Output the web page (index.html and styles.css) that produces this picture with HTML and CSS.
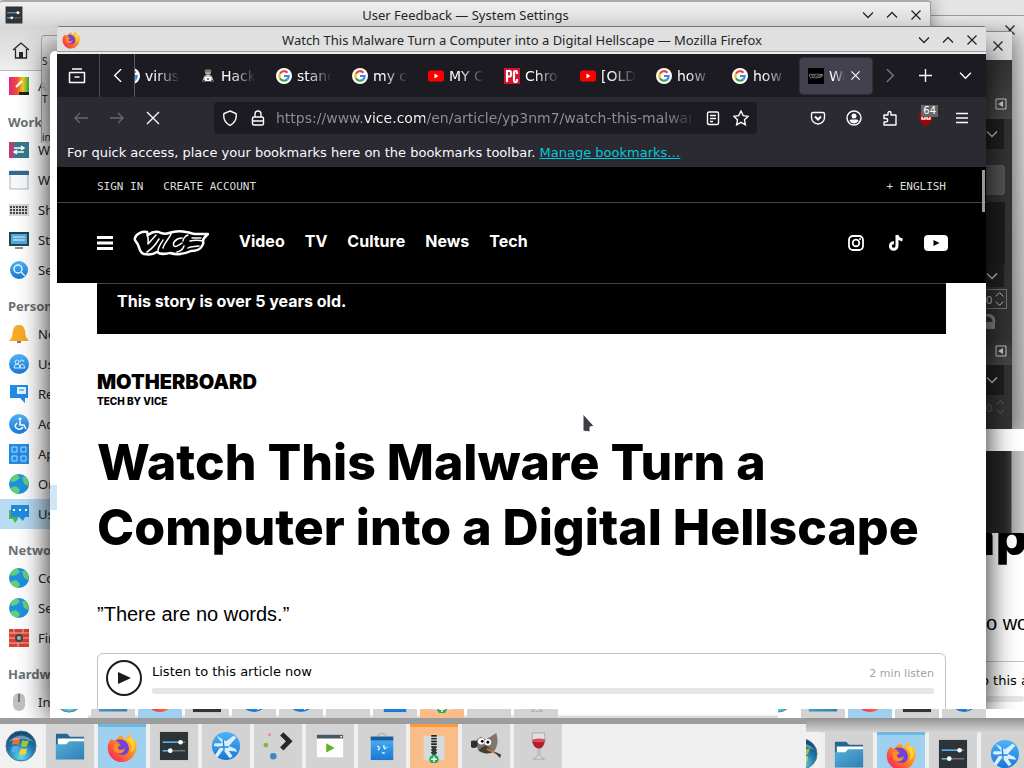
FILE: index.html
```html
<!DOCTYPE html>
<html lang="en">

<head>
    <meta charset="UTF-8">
    <title>Desktop</title>
    <link rel="stylesheet" href="styles.css">
</head>

<body>

    <!-- shared icons -->
    <svg class="defs" aria-hidden="true">
        <defs>
            <linearGradient id="gBlue" x1="0" y1="0" x2="0" y2="1">
                <stop offset="0" stop-color="#4fb4f5" />
                <stop offset="1" stop-color="#1a76d6" />
            </linearGradient>
            <linearGradient id="gFolder" x1="0" y1="0" x2="1" y2="1">
                <stop offset="0" stop-color="#55b0dc" />
                <stop offset="1" stop-color="#2f80b4" />
            </linearGradient>
            <linearGradient id="gFox" x1="1" y1="0" x2="0" y2="1">
                <stop offset="0" stop-color="#ffe03a" />
                <stop offset=".45" stop-color="#ff8a1e" />
                <stop offset=".8" stop-color="#ff3b4e" />
                <stop offset="1" stop-color="#e0158a" />
            </linearGradient>
            <radialGradient id="gOrb" cx=".5" cy=".85" r=".9">
                <stop offset="0" stop-color="#5fe0f0" />
                <stop offset=".5" stop-color="#1f79ae" />
                <stop offset="1" stop-color="#123a5c" />
            </radialGradient>
            <linearGradient id="gRainbow" x1="0" y1="0" x2="1" y2="0">
                <stop offset="0" stop-color="#e0208c" />
                <stop offset=".4" stop-color="#f0502c" />
                <stop offset=".7" stop-color="#f0d020" />
                <stop offset="1" stop-color="#30b040" />
            </linearGradient>
        </defs>
        <symbol id="down" viewBox="0 0 12 12"><path d="M1 3.5l5 5 5-5" fill="none" stroke="currentColor" stroke-width="1.3" /></symbol>
        <symbol id="up" viewBox="0 0 12 12"><path d="M1 8.5l5-5 5 5" fill="none" stroke="currentColor" stroke-width="1.3" /></symbol>
        <symbol id="right" viewBox="0 0 12 12"><path d="M3.5 0l6 6-6 6" fill="none" stroke="currentColor" stroke-width="1.3" /></symbol>
        <symbol id="left" viewBox="0 0 12 12"><path d="M8.5 0l-6 6 6 6" fill="none" stroke="currentColor" stroke-width="1.3" /></symbol>
        <symbol id="cross" viewBox="0 0 12 12"><path d="M1.5 1.5l9 9M10.5 1.5l-9 9" fill="none" stroke="currentColor" stroke-width="1.3" /></symbol>
        <symbol id="plus" viewBox="0 0 12 12"><path d="M6 0v12M0 6h12" fill="none" stroke="currentColor" stroke-width="1.3" /></symbol>
        <symbol id="dock" viewBox="0 0 12 12"><path d="M1 1h10v10H1z" fill="none" stroke="currentColor" /><path d="M8 3v6L3 6z" fill="currentColor" /></symbol>
        <symbol id="google" viewBox="0 0 16 16">
            <circle cx="8" cy="8" r="8" fill="#fff" />
            <g fill="none" stroke-width="2.2">
                <path d="M11.5 4.7A4.7 4.7 0 0 0 3.900 5.700" stroke="#ea4335" />
                <path d="M3.900 5.700a4.700 4.700 0 0 0 0 4.600" stroke="#fbbc05" />
                <path d="M3.900 10.300a4.700 4.700 0 0 0 7.400 1.100" stroke="#34a853" />
                <path d="M11.300 11.400A4.700 4.700 0 0 0 12.700 8H8" stroke="#4285f4" />
            </g>
        </symbol>
        <symbol id="youtube" viewBox="0 0 16 16"><rect y="2.500" width="16" height="11" rx="2.500" fill="#f00" /><path d="M6.500 5.500v5l4-2.500z" fill="#fff" /></symbol>
        <symbol id="hacker" viewBox="0 0 16 16">
            <circle cx="8" cy="4" r="3" fill="#aaa89c" /><path d="M4 3h8M5 1.500h6" stroke="#55554e" />
            <path d="M3 13c0-5 2-6 5-6s5 1 5 6z" fill="#c9c8be" /><path d="M2 12h12v2H2z" fill="#555" /><path d="M5 9h6v4H5z" fill="#fff" /><path d="M7 10h2v2H7z" fill="#777" />
        </symbol>
        <symbol id="pcmag" viewBox="0 0 16 16"><rect width="16" height="16" fill="#d8122f" /><path d="M3 14V3h2.500q1.500 0 1.500 2v1.500q0 2-1.500 2H3M13 6V5q0-2-1.500-2T10 5v7q0 2 1.500 2t1.500-2v-1" fill="none" stroke="#fff" stroke-width="2.200" /></symbol>
        <symbol id="vice" viewBox="0 0 76 26">
            <g fill="none" stroke="currentColor" stroke-linejoin="round" stroke-linecap="round">
                <path d="M2 8C3 4 9 1 14 2l1 3c4-3 9-4 13-2 3 1 5 1 8 0 6-2 12-2 17-1 3 0 6 2 9 2l13 0c-3 3-5 4-5 7 1 2 0 3-1 5-2 4-6 5-11 5-6 3-14 4-21 2-5 1-9 2-13-1-3 2-8 3-13 2C6 23 7 17 4 13 2 11 1 10 2 8z" stroke-width="2.500" />
                <path d="M14 5c2 3 1 6 1 9l8-9M14 22c5-3 9-8 12-13M30 10c-2 4-6 8-5 12M38 4c-2 5-7 9-8 14M49 8c-6 0-10 5-8 8 2 2 5-1 8-3M44 22c4-1 6-3 7-6M55 5c-3 1-5 4-5 6M70 11c-4-1-9-1-13 0M68 8h-9M66 16c-4 1-8 0-11 2" stroke-width="1.500" />
            </g>
        </symbol>
        <symbol id="folder" viewBox="0 0 32 32"><path d="M1 3h12l3 3h15v24H1z" fill="#23698f" /><path d="M3 8h28v8H3z" fill="#fff" /><path d="M1 14h11l3-3h16v19H1z" fill="url(#gFolder)" /></symbol>
        <symbol id="firefox" viewBox="0 0 32 32">
            <path d="M5 6c1 2 2 2 4 2 2-3 5-5 8-6 0 3 1 4 3 5 2-3 3-5 3-7 3 4 3 6 3 8 2 0 3-1 4-2 2 5 2 9 1 13-2 7-8 12-15 12C8 31 2 25 1 18 0 13 2 9 5 6z" fill="url(#gFox)" />
            <path d="M9 8c5-3 13 0 14 6 2 7-4 11-9 9-4-1-6-5-4-8 0-3 2-4 4-4z" fill="#7142d6" />
            <path d="M7 12c3-1 5-1 8 1-3 1-4 2-3 4 2 2 5 1 7-1 0 6-8 8-12 2z" fill="#ff8c24" />
            <path d="M20 7c6 2 8 8 5 14 5-3 6-9 1-16z" fill="#ffd43a" />
        </symbol>
        <symbol id="settings" viewBox="0 0 32 32"><path d="M1 1h30v30H1z" fill="#2e3338" /><path d="M4 12h24M4 21h24" stroke="#70777c" stroke-width="1.500" /><path d="M4 12h18M4 21h7" stroke="#4db5ed" stroke-width="1.500" /><circle cx="23" cy="12" r="2.500" fill="#fff" /><circle cx="12" cy="21" r="2.500" fill="#fff" /></symbol>
        <symbol id="kde" viewBox="0 0 32 32"><circle cx="16" cy="16" r="15" fill="url(#gBlue)" /><path d="M6 5l10 6 8-6 3 2-8 9 7 3 2 3-9-1 4 6-3 2-7-9-6 8-3-2 6-9-7-1 1-3 8 0z" fill="#d9f0ff" /><path d="M13 9l1 12M9 17h10" stroke="#2384e2" stroke-width="1.500" /></symbol>
        <symbol id="plasma" viewBox="0 0 32 32"><path d="M20 3l8 8-8 8" fill="none" stroke="#25282b" stroke-width="5" /><circle cx="7" cy="4" r="1.500" fill="#f08b78" /><circle cx="3" cy="15" r="2.500" fill="#85b73b" /><circle cx="11" cy="27" r="3.500" fill="#4187c6" /></symbol>
        <symbol id="player" viewBox="0 0 32 32"><path d="M2 4h28v24H2z" fill="#fdfdfd" /><path d="M2 4h28v4H2z" fill="#46576a" /><circle cx="28" cy="6" r="1" fill="#fff" /><path d="M12 13v10l9-5z" fill="#5cb51c" /></symbol>
        <symbol id="bag" viewBox="0 0 32 32"><path d="M11 6q5-7 10 0" fill="none" stroke="#a9bcc6" stroke-width="2" /><path d="M4 6h24v25H4z" fill="url(#gBlue)" /><path d="M4 6h24v4H4z" fill="#1d5c99" /><path d="M11 16l3 2-3 3M18 15v4l4-2M16 23l4 1" stroke="#e5f7ff" stroke-width="1.500" fill="none" stroke-dasharray="3 1" /></symbol>
        <symbol id="ark" viewBox="0 0 32 32"><path d="M5 3h22v26H5z" fill="#d5dadc" /><path d="M16 2v29" stroke="#fff" stroke-width="6" /><path d="M16 2v20" stroke="#222" stroke-width="6" stroke-dasharray="2 1" /><path d="M14 14h4v16h-4z" fill="#34383a" /><circle cx="16" cy="28" r="5" fill="#27a85a" /><path d="M16 25v6M13 28h6" stroke="#fff" stroke-width="1.500" /></symbol>
        <symbol id="gimp" viewBox="0 0 32 32"><path d="M4 11l6-5 6 3 11-7c2 7 2 13-2 19-5 4-14 3-17 0z" fill="#81766a" /><path d="M8 20l8-5 8 7q-9 5-16-2z" fill="#42403b" /><circle cx="11" cy="11" r="3.500" fill="#fff" /><circle cx="18" cy="12" r="3.500" fill="#fff" /><circle cx="12" cy="11" r="1.500" /><circle cx="18" cy="12" r="1.500" /><circle cx="3" cy="14" r="4" fill="#2b2f31" /><path d="M17 19l12 6" stroke="#c4793f" stroke-width="2" /><path d="M25 22l7 3-1 4z" fill="#34393f" /></symbol>
        <symbol id="wine" viewBox="0 0 32 32"><path d="M10 2h13q2 14-5 17v8l5 3H11l5-3v-8q-8-4-6-17z" fill="#e3dfe0" stroke="#aaa3a4" /><path d="M10 10h13q0 7-6 9-7-2-7-9z" fill="#b41d30" /><ellipse cx="17" cy="10" rx="7" ry="2" fill="#dc4e5c" /></symbol>
        <symbol id="orb" viewBox="0 0 32 32"><circle cx="16" cy="16" r="15" fill="url(#gOrb)" stroke="#4d748c" /><path d="M8 9q4-2 7 0l-1 6q-4-2-7 0z" fill="#ef6a37" /><path d="M17 10q4 2 7 0l-2 6q-3 2-6 0z" fill="#9ac93c" /><path d="M7 17q4-2 7 0l-2 6q-3-2-6 0z" fill="#5ba9e8" /><path d="M16 18q3 2 6 0l-1 6q-4 2-7 0z" fill="#f9cf3c" /><path d="M3 12q13-13 26 0Q16 6 3 12z" fill="#fff" opacity=".35" /></symbol>
        <symbol id="globe" viewBox="0 0 20 20"><circle cx="10" cy="10" r="10" fill="#1d91e0" /><path d="M1 6q4-6 8-5l2 3-4 3-4 1zM1 14l6-2 4 4-2 4Q3 19 1 14zM13 3l4 0q4 5 2 9l-4-2z" fill="#63cf79" /></symbol>
    </svg>

    <div class="desktop">

        <!-- windows at the back, right side -->
        <section class="window back-window">
            <button class="icon-btn" aria-label="Close"><svg><use href="#cross" /></svg></button>
        </section>
        <section class="window gimp-window">
            <header><button class="icon-btn" aria-label="Close"><svg><use href="#cross" /></svg></button></header>
            <div class="gimp-head"><svg><use href="#dock" /></svg></div>
            <div class="gimp-pick"><svg><use href="#down" /></svg></div>
            <div class="gimp-tile"></div>
            <div class="gimp-list"></div>
            <div class="gimp-pick small"><svg><use href="#down" /></svg></div>
            <div class="gimp-spin"><span>0</span><span><svg><use href="#up" /></svg><svg><use href="#down" /></svg></span></div>
            <svg class="gimp-lock" viewBox="0 0 10 16"><path d="M0 1q8 0 8 7" fill="none" stroke="#888" stroke-width="3" /><path d="M0 8h9v7H0z" fill="#888" /></svg>
            <div class="gimp-head low"><svg><use href="#dock" /></svg></div>
            <div class="gimp-pick"><svg><use href="#down" /></svg></div>
            <div class="gimp-spin off"><span>0</span><span><svg><use href="#up" /></svg><svg><use href="#down" /></svg></span></div>
        </section>
        <section class="side-article">
            <div class="side-panel"></div>
            <p class="side-title">ap</p>
            <p class="side-lead">o wo</p>
            <div class="side-listen"><p>o this a</p><div class="track"></div></div>
        </section>

        <!-- System Settings -->
        <section class="window settings-window">
            <header class="titlebar">
                <svg class="app-icon"><use href="#settings" /></svg>
                <h2>User Feedback — System Settings</h2>
                <button class="icon-btn" aria-label="Minimize"><svg><use href="#down" /></svg></button>
                <button class="icon-btn" aria-label="Maximize"><svg><use href="#up" /></svg></button>
                <button class="icon-btn" aria-label="Close"><svg><use href="#cross" /></svg></button>
            </header>
            <div class="settings-tools">
                <button class="home" aria-label="Home"><svg viewBox="0 0 18 18"><path d="M1 9l8-7 8 7M3.500 8v9h11V8" fill="none" stroke="#232629" stroke-width="1.300" /><path d="M7 11h4v6H7z" fill="#232629" /></svg></button>
            </div>
            <nav class="sidebar">
                <a href="#"><svg viewBox="0 0 20 20"><path d="M0 1h20v18H0z" fill="url(#gRainbow)" /><path d="M7 11l6-6" stroke="#fff" stroke-width="2" /><path d="M10 16h10v3H10z" fill="#222" /></svg>A</a>
                <h3>Work</h3>
                <a href="#"><svg viewBox="0 0 20 20"><path d="M0 2h20v16H0z" fill="#367a8e" /><path d="M0 2h5v16H0z" fill="#b83d72" /><path d="M5 8h9M6 12h9M12 6l3 2-3 2M8 10l-3 2 3 2" stroke="#fff" fill="none" stroke-width="1.500" /></svg>W</a>
                <a href="#"><svg viewBox="0 0 20 20"><path d="M1 1h18v18H1z" fill="#f6f8fa" stroke="#a9b5bd" /><path d="M0 1h20v4H0z" fill="#36688f" /></svg>W</a>
                <a href="#"><svg viewBox="0 0 20 20"><path d="M0 4h20v12H0z" fill="#d6d9da" /><path d="M1 7h18M1 10h18M1 13h18" stroke="#444" stroke-width="2" stroke-dasharray="2 1" /></svg>Sh</a>
                <a href="#"><svg viewBox="0 0 20 20"><path d="M0 2h20v14H0z" fill="#1e4759" /><path d="M2 4h16v10H2z" fill="#54a8d6" /><path d="M4 7h12M4 10h12" stroke="#e4f5fc" /><path d="M6 18h8" stroke="#889196" stroke-width="2" /></svg>St</a>
                <a href="#"><svg viewBox="0 0 20 20"><circle cx="10" cy="10" r="9" fill="url(#gBlue)" /><circle cx="9" cy="9" r="4" fill="none" stroke="#e3f5ff" stroke-width="1.500" /><path d="M12 12l4 4" stroke="#e3f5ff" stroke-width="1.500" /></svg>Se</a>
                <h3>Person</h3>
                <a href="#"><svg viewBox="0 0 20 20"><path d="M10 1c7 0 6 8 7 12l3 4H0l3-4c1-4 0-12 7-12z" fill="#f7a928" /><path d="M8 17h4v2H8z" fill="#7a7e80" /></svg>No</a>
                <a href="#"><svg viewBox="0 0 20 20"><circle cx="10" cy="10" r="10" fill="url(#gBlue)" /><path d="M5 14q0-4 3-4t3 4zM11 14q0-4 2-4t3 4zM6 8a2 2 0 1 1 4 0 2 2 0 1 1-4 0M11 8a2 2 0 1 1 4 0" fill="none" stroke="#d8f0ff" /></svg>Us</a>
                <a href="#"><svg viewBox="0 0 20 20"><path d="M1 1h18v13h-3v5l-5-5H1z" fill="#228be6" /><path d="M8 3h9v7H8z" fill="#e2f5ff" /><path d="M10 6h5" stroke="#228be6" /></svg>Re</a>
                <a href="#"><svg viewBox="0 0 20 20"><circle cx="10" cy="10" r="10" fill="url(#gBlue)" /><circle cx="11" cy="5" r="1.500" fill="#fff" /><path d="M11 7v4h4l2 4M8 9q-4 4 1 6 3 1 5-2" fill="none" stroke="#fff" stroke-width="1.500" /></svg>Ac</a>
                <a href="#"><svg viewBox="0 0 20 20"><path d="M0 0h20v20H0z" fill="#228be6" /><path d="M3 3h5v5H3zM12 3h5v5h-5zM3 12h5v5H3zM12 12h5v5h-5z" fill="none" stroke="#a9dcff" /></svg>Ap</a>
                <a href="#"><svg><use href="#globe" /></svg>On</a>
                <a href="#" class="selected"><svg viewBox="0 0 20 20"><path d="M0 6h9v9l-3 4-2-4H0z" fill="#49b849" /><path d="M2 1h18v12h-4l-2 4-4-4H2z" fill="#218be2" /><path d="M4 6h2M10 6h2M16 6h2" stroke="#fff" stroke-width="2" /></svg>Us</a>
                <h3>Netwo</h3>
                <a href="#"><svg><use href="#globe" /></svg>Co</a>
                <a href="#"><svg><use href="#globe" /></svg>Se</a>
                <a href="#"><svg viewBox="0 0 20 20"><path d="M0 1h20v18H0z" fill="#d64235" /><path d="M0 5h20M0 10h20M0 15h20M5 1v4M14 1v4M9 15v4" stroke="#f0b3a5" /><circle cx="10" cy="10" r="4" fill="#42464a" /><circle cx="10" cy="10" r="2" fill="#a2b5ad" /></svg>Fir</a>
                <h3>Hardw</h3>
                <a href="#"><svg viewBox="0 0 20 20"><rect x="4" y="1" width="12" height="18" rx="6" fill="#bfc1c2" /><path d="M10 2v8" stroke="#555" stroke-width="1.500" /></svg>In</a>
            </nav>
        </section>

        <section class="window trail-window"><span>S</span><span>T</span><span>in</span></section>

        <!-- Firefox -->
        <div class="firefox-back"><i class="patch"></i></div>
        <section class="window firefox-window">
            <header class="titlebar">
                <svg class="app-icon"><use href="#firefox" /></svg>
                <h2>Watch This Malware Turn a Computer into a Digital Hellscape — Mozilla Firefox</h2>
                <button class="icon-btn" aria-label="Minimize"><svg><use href="#down" /></svg></button>
                <button class="icon-btn" aria-label="Maximize"><svg><use href="#up" /></svg></button>
                <button class="icon-btn" aria-label="Close"><svg><use href="#cross" /></svg></button>
            </header>
            <div class="title-edge"></div>

            <div class="tabbar">
                <button class="view" aria-label="Firefox View"><svg viewBox="0 0 18 18"><path d="M4 2h10M1.500 5.500h15v10h-15z" fill="none" stroke="currentColor" stroke-width="1.500" stroke-linejoin="round" /><path d="M6.500 10h5" stroke="currentColor" stroke-width="1.500" /></svg></button>
                <button class="scroll-left" aria-label="Scroll left"><svg><use href="#left" /></svg></button>
                <div class="tabs" role="tablist">
                    <button class="tab" role="tab"><svg><use href="#google" /></svg><span>virus</span></button>
                    <button class="tab" role="tab"><svg><use href="#hacker" /></svg><span>Hack</span></button>
                    <button class="tab" role="tab"><svg><use href="#google" /></svg><span>stand</span></button>
                    <button class="tab" role="tab"><svg><use href="#google" /></svg><span>my co</span></button>
                    <button class="tab" role="tab"><svg><use href="#youtube" /></svg><span>MY C</span></button>
                    <button class="tab" role="tab"><svg><use href="#pcmag" /></svg><span>Chro</span></button>
                    <button class="tab" role="tab"><svg><use href="#youtube" /></svg><span>[OLD</span></button>
                    <button class="tab" role="tab"><svg><use href="#google" /></svg><span>how</span></button>
                    <button class="tab" role="tab"><svg><use href="#google" /></svg><span>how</span></button>
                    <button class="tab active" role="tab" aria-selected="true"><svg viewBox="0 0 76 76"><path d="M0 0h76v76H0z" fill="#000" /><use href="#vice" x="5" y="26" width="66" height="24" /></svg><span>Wa</span><svg class="close"><use href="#cross" /></svg></button>
                </div>
                <button class="scroll-right" aria-label="Scroll right"><svg><use href="#right" /></svg></button>
                <button class="new-tab" aria-label="New tab"><svg><use href="#plus" /></svg></button>
                <button class="all-tabs" aria-label="List all tabs"><svg><use href="#down" /></svg></button>
            </div>

            <div class="navbar">
                <button class="dim" aria-label="Back"><svg viewBox="0 0 16 16"><path d="M15 8H2M7 3L2 8l5 5" /></svg></button>
                <button class="dim" aria-label="Forward"><svg viewBox="0 0 16 16"><path d="M1 8h13M9 3l5 5-5 5" /></svg></button>
                <button aria-label="Stop"><svg viewBox="0 0 16 16"><path d="M2 2l12 12M14 2L2 14" /></svg></button>
                <div class="urlbar">
                    <svg viewBox="0 0 16 16"><path d="M8 1l6 2.500c1 5-1 9-6 12-5-3-7-7-6-12z" /></svg>
                    <svg viewBox="0 0 16 16"><rect x="2.500" y="7" width="11" height="8" rx="1.500" /><path d="M5 7V4a3 3 0 0 1 6 0v3M3 11h10" /></svg>
                    <input type="text" aria-label="Address" value="https://www.vice.com/en/article/yp3nm7/watch-this-malware-turn-a-computer-into-a-digital-hellscape">
                    <button aria-label="Reader view"><svg viewBox="0 0 16 16"><rect x="2.500" y="2" width="11" height="12.500" rx="1.500" /><path d="M5 5.500h6M5 8.500h6M5 11.500h3" /></svg></button>
                    <button aria-label="Bookmark"><svg viewBox="0 0 16 16"><path d="M8 1l2.200 4.600 5 .7-3.700 3.500.9 5L8 12.400l-4.400 2.400.9-5L.8 6.300l5-.7z" /></svg></button>
                </div>
                <button aria-label="Pocket"><svg viewBox="0 0 16 16"><path d="M3 2.500h10q1.500 0 1.500 1.500v3.500a6.500 6.500 0 0 1-13 0V4Q1.500 2.500 3 2.500z" /><path d="M5 6.500l3 3 3-3" stroke-width="2" /></svg></button>
                <button aria-label="Account"><svg viewBox="0 0 16 16"><circle cx="8" cy="8" r="7" /><circle cx="8" cy="6" r="2.500" fill="currentColor" stroke="none" /><path d="M3.500 11q0-1.500 1.500-1.500h6q1.500 0 1.500 1.500Q8 16 3.500 11z" fill="currentColor" stroke="none" /></svg></button>
                <button aria-label="Extensions"><svg viewBox="0 0 16 16"><path d="M2 5h4V3a1.500 1.500 0 0 1 3 0v2h5v10H2v-3h2a1.700 1.700 0 0 0 0-3.500H2z" stroke-linejoin="round" /></svg></button>
                <button class="ublock" aria-label="uBlock Origin"><svg viewBox="0 0 16 16"><path d="M8 0l7 3c0 6-1 10-7 13C2 13 1 9 1 3z" fill="#a00" stroke="none" /><path d="M4 6v3h3V6M9 6v3h3V6" /></svg><b>64</b></button>
                <button aria-label="Menu"><svg viewBox="0 0 16 16"><path d="M2 3.500h12M2 8h12M2 12.500h12" /></svg></button>
            </div>
            <p class="bookmarks">For quick access, place your bookmarks here on the bookmarks toolbar. <a href="#">Manage bookmarks…</a></p>

            <div class="page">
                <div class="vice-top">
                    <a href="#">SIGN IN</a>
                    <a href="#">CREATE ACCOUNT</a>
                    <a href="#" class="lang">+ ENGLISH</a>
                </div>
                <nav class="vice-nav">
                    <button class="burger" aria-label="Menu"><svg viewBox="0 0 16 14"><path d="M0 1.500h16M0 7h16M0 12.500h16" stroke="#fff" stroke-width="3" /></svg></button>
                    <a href="#" class="logo" aria-label="Vice"><svg><use href="#vice" /></svg></a>
                    <div class="links">
                        <a href="#">Video</a>
                        <a href="#">TV</a>
                        <a href="#">Culture</a>
                        <a href="#">News</a>
                        <a href="#">Tech</a>
                    </div>
                    <div class="social">
                        <a href="#" aria-label="Instagram"><svg viewBox="0 0 24 24"><g fill="none" stroke="#fff" stroke-width="1.800"><rect x="5" y="5" width="14" height="14" rx="4" /><circle cx="12" cy="12" r="3.300" /></g><circle cx="16" cy="8" r="1" fill="#fff" /></svg></a>
                        <a href="#" aria-label="TikTok"><svg viewBox="0 0 24 24"><path d="M13 4v11a3.300 3.300 0 1 1-3-3.300M13 4q1 4 5.500 5" fill="none" stroke="#fff" stroke-width="3" /></svg></a>
                        <a href="#" aria-label="YouTube"><svg viewBox="0 0 24 24"><rect y="4" width="24" height="16" rx="4" fill="#fff" /><path d="M9.500 9v6l6-3z" /></svg></a>
                    </div>
                </nav>
                <article class="story">
                    <p class="old">This story is over 5 years old.</p>
                    <a href="#" class="brand">MOTHERBOARD<small>TECH BY VICE</small></a>
                    <h1>Watch This Malware Turn a Computer into a Digital Hellscape</h1>
                    <p class="lead">”There are no words.”</p>
                    <div class="listen">
                        <button aria-label="Play"><svg viewBox="0 0 36 36"><circle cx="18" cy="18" r="17" fill="#fff" stroke="#1b1b1b" stroke-width="2" /><path d="M12 12v12l13-6z" fill="#1b1b1b" /></svg></button>
                        <div class="listen-body">
                            <p>Listen to this article now <span>2 min listen</span></p>
                            <div class="track"></div>
                        </div>
                    </div>
                </article>
                <i class="scrollbar"></i>
            </div>
        </section>

        <!-- leftover slices of the task bar -->
        <div class="slice slice-left">
            <i class="start"><svg><use href="#orb" /></svg></i>
            <i><svg><use href="#folder" /></svg></i>
            <i class="on"><svg><use href="#firefox" /></svg></i>
            <i><svg><use href="#settings" /></svg></i>
            <i><svg><use href="#kde" /></svg></i>
            <i><svg><use href="#kde" /></svg></i>
            <i></i>
            <i><svg><use href="#bag" /></svg></i>
            <i class="busy"><svg><use href="#ark" /></svg></i>
            <i></i>
            <i><svg><use href="#wine" /></svg></i>
        </div>
        <div class="slice slice-right">
            <i class="start"><svg><use href="#orb" /></svg></i>
            <i><svg><use href="#folder" /></svg></i>
            <i class="on"><svg><use href="#firefox" /></svg></i>
            <i><svg><use href="#settings" /></svg></i>
            <i><svg><use href="#kde" /></svg></i>
        </div>

        <footer class="taskbar">
            <button class="start" aria-label="Start"><svg><use href="#orb" /></svg></button>
            <button aria-label="Files"><svg><use href="#folder" /></svg></button>
            <button class="on" aria-label="Firefox"><svg><use href="#firefox" /></svg></button>
            <button aria-label="Settings"><svg><use href="#settings" /></svg></button>
            <button aria-label="KDE"><svg><use href="#kde" /></svg></button>
            <button aria-label="Plasma"><svg><use href="#plasma" /></svg></button>
            <button aria-label="Player"><svg><use href="#player" /></svg></button>
            <button aria-label="Discover"><svg><use href="#bag" /></svg></button>
            <button class="busy" aria-label="Archive"><svg><use href="#ark" /></svg></button>
            <button aria-label="GIMP"><svg><use href="#gimp" /></svg></button>
            <button aria-label="Wine"><svg><use href="#wine" /></svg></button>
        </footer>
        <footer class="taskbar second">
            <button class="start" aria-label="Start"><svg><use href="#orb" /></svg></button>
            <button aria-label="Files"><svg><use href="#folder" /></svg></button>
            <button class="on" aria-label="Firefox"><svg><use href="#firefox" /></svg></button>
            <button aria-label="Settings"><svg><use href="#settings" /></svg></button>
            <button aria-label="KDE"><svg><use href="#kde" /></svg></button>
        </footer>

        <svg class="pointer" viewBox="0 0 14 22"><path d="M1 1l11 12-4 1 0 5-7-1z" fill="#3b3f44" stroke="#fff" /></svg>
    </div>

</body>

</html>
```

FILE: styles.css
```css
* {
    box-sizing: border-box;
}

body {
    margin: 0;
    font-family: "Noto Sans", sans-serif;
    font-size: 13px;
    color: #232629;
}

h1,
h2,
h3,
p {
    margin: 0;
}

a {
    color: inherit;
    text-decoration: none;
}

button {
    display: flex;
    align-items: center;
    justify-content: center;
    flex: none;
    padding: 0;
    border: 0;
    background: none;
    color: inherit;
    font: inherit;
}

svg {
    display: block;
    flex: none;
}

.defs {
    position: absolute;
    width: 0;
    height: 0;
}

.desktop {
    position: relative;
    height: 100vh;
    min-height: 768px;
    overflow: hidden;
    background: #e4e4e4;
}

.window {
    position: absolute;
    overflow: hidden;
}

.icon-btn {
    width: 24px;
    height: 24px;
}

.icon-btn svg {
    width: 12px;
    height: 12px;
}

.titlebar {
    display: flex;
    align-items: center;
    padding: 0 2px 0 5px;
}

.titlebar h2 {
    flex: 1;
    padding-left: 52px;
    font-size: 13px;
    font-weight: normal;
    line-height: 18px;
    text-align: center;
    white-space: nowrap;
}

.app-icon {
    width: 18px;
    height: 18px;
}

/* windows at the back */

.back-window {
    top: 15px;
    left: 900px;
    right: 0;
    height: 414px;
    border-top: 1px solid #9a9a9a;
    background: linear-gradient(#e6e6e6, #d8d8d8 70px, #bdbdbd);
}

.back-window .icon-btn {
    margin: 2px 2px 0 auto;
}

.gimp-window {
    top: 31px;
    right: 12px;
    width: 110px;
    height: 398px;
    padding-left: 84px;
    border-top: 1px solid #888;
    background: #343434;
    box-shadow: 4px 4px 18px rgba(0, 0, 0, 0.4);
    color: #ccc;
}

.gimp-window header {
    height: 28px;
    padding-top: 2px;
    background: #dedede;
    color: #232629;
}

.gimp-head {
    display: flex;
    justify-content: flex-end;
    align-items: center;
    height: 59px;
    padding: 28px 5px 0 0;
    background: linear-gradient(#333, #484848);
}

.gimp-head svg,
.gimp-pick svg {
    width: 12px;
    height: 12px;
}

.gimp-pick {
    height: 30px;
    padding: 9px 0;
    margin-right: 8px;
    background: #202020;
}

.gimp-tile {
    height: 30px;
    margin: 16px 7px 7px 0;
    border: 1px solid #5a5a5a;
    border-left: 0;
    border-radius: 0 4px 4px 0;
    background: #555;
}

.gimp-list {
    height: 63px;
    margin-right: 7px;
    background: #1d1d1d;
}

.gimp-pick.small {
    height: 22px;
    padding: 5px 0;
}

.gimp-spin {
    display: flex;
    justify-content: space-between;
    align-items: center;
    height: 20px;
    margin: 2px 5px 0 0;
    padding-right: 2px;
    border: 1px solid #777;
    border-left: 0;
    font-size: 11px;
}

.gimp-spin svg {
    width: 9px;
    height: 9px;
}

.gimp-spin.off {
    border: 0;
    color: #666;
}

.gimp-lock {
    width: 10px;
    height: 16px;
    margin: 5px 0 7px;
}

.gimp-head.low {
    height: 28px;
    padding-top: 0;
}

.side-article {
    position: absolute;
    top: 429px;
    left: 986px;
    right: 0;
    height: 290px;
    padding-top: 22px;
    overflow: hidden;
    background: #fff;
    color: #000;
    font-family: Inter, sans-serif;
    white-space: nowrap;
}

.side-panel {
    position: relative;
    height: 82px;
    background: linear-gradient(90deg, #262626 18px, #3a3a3a 25px, #a8a8a8 26px, #c8c8c8);
}

.side-title {
    height: 60px;
    margin: -26px 0 0 -20px;
    font-size: 50px;
    font-weight: 800;
    line-height: 60px;
}

.side-lead {
    margin-top: 44px;
    font-family: "Liberation Sans", sans-serif;
    font-size: 20px;
    line-height: 24px;
}

.side-listen {
    margin-top: 26px;
    padding-top: 10px;
    border-top: 1px solid #c4c4c4;
    font-family: "DejaVu Sans", sans-serif;
}

.side-listen p {
    margin-left: -5px;
    line-height: 18px;
}

.side-listen .track {
    margin-top: 6px;
}

/* System Settings */

.settings-window {
    top: 0;
    left: 0;
    right: 93px;
    height: 722px;
    border-top: 2px solid #a9a9a9;
    border-right: 1px solid #999;
    border-radius: 4px 4px 0 0;
    background: #fff;
    box-shadow: 0 2px 18px rgba(0, 0, 0, 0.4);
}

.settings-window .titlebar {
    height: 26px;
    background: linear-gradient(#f1f1f1, #d6d6d6);
}

.settings-tools {
    height: 43px;
    padding: 13px 12px;
    border-bottom: 1px solid #bbb;
    background: linear-gradient(#d8d8d8, #eee);
}

.home svg {
    width: 18px;
    height: 18px;
}

.sidebar {
    width: 240px;
}

.sidebar a {
    display: flex;
    align-items: center;
    gap: 9px;
    height: 30px;
    padding-left: 9px;
}

.sidebar a svg {
    width: 20px;
    height: 20px;
}

.sidebar .selected {
    background: #b9dcf2;
}

.sidebar h3 {
    height: 34px;
    padding: 12px 0 0 8px;
    font-size: 13px;
    line-height: 18px;
    color: #6e7173;
}

.trail-window {
    display: flex;
    flex-direction: column;
    gap: 24px;
    top: 35px;
    left: 41px;
    width: 60px;
    height: 108px;
    padding-top: 18px;
    border-top: 1px solid #999;
    border-left: 1px solid #aaa;
    border-radius: 4px 0 0 0;
    background: linear-gradient(#dedede 20px, rgba(220, 220, 220, 0.4));
    font-size: 10px;
    line-height: 14px;
}

/* Firefox */

.firefox-back {
    position: absolute;
    top: 51px;
    left: 50px;
    right: 38px;
    height: 667px;
    border-radius: 5px 0 0 0;
    background: #fff;
    box-shadow: 0 0 30px rgba(0, 0, 0, 0.9);
}

.patch {
    display: block;
    width: 7px;
    height: 25px;
    margin-top: 434px;
    background: #cfe6f7;
}

.firefox-window {
    display: flex;
    flex-direction: column;
    top: 26px;
    left: 57px;
    right: 38px;
    height: 683px;
    border-top: 1px solid #777;
    border-radius: 3px 3px 0 0;
    background: #fff;
    font-family: "DejaVu Sans", sans-serif;
}

.firefox-window .titlebar {
    flex: none;
    height: 24px;
    padding-top: 2px;
    background: #e0e0e0;
    font-family: "Noto Sans", sans-serif;
}

.title-edge {
    flex: none;
    height: 3px;
    border-top: 1px solid #999;
    background: #ececec;
}

.tabbar {
    display: flex;
    flex: none;
    height: 43px;
    padding-right: 4px;
    background: #1c1b22;
    color: #fbfbfe;
}

.tabbar svg {
    width: 13px;
    height: 13px;
}

.tabbar .view {
    width: 43px;
    padding-right: 3px;
    border-right: 1px solid #4a4a52;
}

.tabbar .view svg {
    width: 18px;
    height: 18px;
}

.scroll-left {
    width: 35px;
    padding-left: 3px;
    border-right: 1px solid #5a5a62;
}

.tabs {
    display: flex;
    flex: 1;
    gap: 4px;
    align-items: center;
    justify-content: flex-end;
    min-width: 0;
    padding-right: 4px;
    overflow: hidden;
}

.tab {
    justify-content: flex-start;
    gap: 5px;
    width: 72px;
    height: 36px;
    padding: 0 8px;
    border-radius: 4px;
    font-size: 14px;
}

.tab svg {
    width: 16px;
    height: 16px;
}

.tab span {
    flex: 1;
    min-width: 0;
    overflow: hidden;
    text-align: left;
    white-space: nowrap;
    -webkit-mask-image: linear-gradient(90deg, #000 30%, transparent);
    mask-image: linear-gradient(90deg, #000 30%, transparent);
}

.tab.active {
    background: #42414d;
    box-shadow: 0 0 2px #666;
}

.tab .close {
    width: 11px;
    height: 11px;
    margin-right: 3px;
}

.scroll-right {
    width: 26px;
    color: #77777d;
}

.new-tab {
    width: 46px;
}

.all-tabs {
    width: 34px;
}

.navbar {
    display: flex;
    flex: none;
    align-items: center;
    height: 41px;
    padding: 0 6px;
    background: #2b2a33;
    color: #fbfbfe;
}

.navbar button {
    width: 36px;
    height: 32px;
}

.navbar svg {
    width: 16px;
    height: 16px;
    fill: none;
    stroke: currentColor;
    stroke-width: 1.400;
}

.navbar .dim {
    color: #66656d;
}

.urlbar {
    display: flex;
    flex: 1;
    align-items: center;
    gap: 12px;
    min-width: 0;
    height: 32px;
    margin: 0 43px;
    padding: 0 2px 0 8px;
    border-radius: 4px;
    background: #1c1b22;
}

.urlbar input {
    flex: 1;
    min-width: 0;
    padding: 0;
    margin: 0 -4px 0 -2px;
    border: 0;
    outline: 0;
    background: linear-gradient(90deg, #8f8f96 88px, #fbfbfe 88px, #fbfbfe 149px, #8f8f96 149px, #8f8f96 390px, transparent 422px);
    -webkit-background-clip: text;
    background-clip: text;
    color: transparent;
    font: 14px "DejaVu Sans", sans-serif;
}

.urlbar button {
    width: 28px;
    margin-right: -12px;
}

.urlbar button:last-child {
    margin-right: 0;
}

.navbar .ublock {
    position: relative;
    color: #fff;
}

.ublock b {
    position: absolute;
    top: 3px;
    right: 6px;
    padding: 0 2px;
    background: #666;
    font-size: 10px;
    font-weight: normal;
    line-height: 12px;
}

.bookmarks {
    flex: none;
    height: 29px;
    padding: 5px 10px;
    background: #2b2a33;
    color: #fbfbfe;
    font-size: 13px;
    line-height: 20px;
    white-space: nowrap;
}

.bookmarks a {
    color: #00c8d7;
    text-decoration: underline;
}

.page {
    position: relative;
    flex: 1;
    min-height: 0;
    overflow: hidden;
    color: #000;
    font-family: Inter, sans-serif;
}

.vice-top {
    display: flex;
    gap: 20px;
    height: 36px;
    padding: 12px 40px 0;
    border-bottom: 1px solid #444;
    background: #000;
    color: #ddd;
    font: 11px/16px "DejaVu Sans Mono", monospace;
}

.lang {
    margin-left: auto;
}

.vice-nav {
    display: flex;
    align-items: center;
    gap: 20px;
    height: 80px;
    padding: 0 38px 0 40px;
    background: #000;
    color: #fff;
    font-size: 16px;
    font-weight: 700;
}

.burger svg {
    width: 16px;
    height: 14px;
}

.logo {
    margin-right: 10px;
}

.logo svg {
    width: 76px;
    height: 26px;
}

.links {
    display: flex;
    gap: 20px;
    padding-bottom: 4px;
}

.social {
    display: flex;
    gap: 16px;
    margin-left: auto;
}

.social svg {
    width: 24px;
    height: 24px;
}

.story {
    padding: 0 40px;
}

.old {
    height: 51px;
    padding: 7px 20px;
    border-top: 1px solid #444;
    background: #000;
    color: #fff;
    font-size: 16px;
    font-weight: 700;
    line-height: 20px;
}

.brand {
    display: block;
    margin-top: 38px;
    font-size: 20px;
    font-weight: 900;
    line-height: 20px;
}

.brand small {
    display: block;
    font-size: 10px;
    font-weight: 800;
    line-height: 18px;
}

h1 {
    margin-top: 20px;
    font-size: 50px;
    font-weight: 800;
    line-height: 65px;
}

.lead {
    margin-top: 40px;
    font-family: "Liberation Sans", sans-serif;
    font-size: 20px;
    line-height: 28px;
}

.listen {
    display: flex;
    gap: 10px;
    height: 80px;
    margin-top: 25px;
    padding: 6px 11px 0 8px;
    border: 1px solid #c4c4c4;
    border-radius: 6px;
    font-family: "DejaVu Sans", sans-serif;
}

.listen button {
    height: 36px;
}

.listen button svg {
    width: 36px;
    height: 36px;
}

.listen-body {
    flex: 1;
    padding-top: 3px;
}

.listen p {
    display: flex;
    justify-content: space-between;
    line-height: 18px;
}

.listen span {
    color: #a2a2a2;
    font-size: 11px;
    padding-top: 2px;
}

.track {
    height: 6px;
    margin-top: 5px;
    border-radius: 2px;
    background: #e6e6e6;
}

.scrollbar {
    position: absolute;
    top: 3px;
    right: 1px;
    width: 3px;
    height: 42px;
    background: #999;
}

/* task bar */

.slice {
    position: absolute;
    top: 709px;
    display: flex;
    align-items: flex-end;
    gap: 3px;
    height: 9px;
    overflow: hidden;
    background: #f4f4f4;
}

.slice i {
    display: flex;
    flex: none;
    justify-content: center;
    align-items: flex-end;
    width: 44px;
    height: 40px;
    padding-bottom: 5px;
    background: #d3d3d3;
}

.slice svg {
    width: 30px;
    height: 30px;
}

.slice .start {
    width: 38px;
    background: #fff;
}

.slice-left {
    left: 50px;
    right: 38px;
    background: linear-gradient(#fff 6px, #ddd 7px);
}

.slice-right {
    left: 778px;
    right: 0;
    background: #fff;
}

.slice-right .start {
    width: 20px;
    padding-right: 20px;
}

.slice .on,
.taskbar .on {
    background: #9fd0ef;
}

.slice .busy,
.taskbar .busy {
    background: #fabd8a;
}

.taskbar {
    position: absolute;
    top: 718px;
    left: 0;
    right: 0;
    bottom: 0;
    display: flex;
    gap: 4px;
    border-top: 6px solid #9c9c9c;
    background: #efefef;
}

.taskbar button {
    width: 48px;
    background: #d3d3d3;
}

.taskbar svg {
    width: 30px;
    height: 30px;
}

.taskbar .start {
    width: 42px;
    background: #f1f1f1;
}

.taskbar .start svg {
    width: 32px;
    height: 32px;
}

.taskbar .on {
    border-top: 3px solid #6db7e5;
}

.taskbar .busy {
    border-top: 3px solid #fb9a3c;
}

.taskbar.second {
    left: 806px;
    padding-top: 14px;
    border: 0;
    overflow: hidden;
    background: linear-gradient(#929292, #d4d4d4 14px, #efefef 15px);
}

.taskbar.second button {
    padding-top: 8px;
}

.taskbar.second .start {
    justify-content: flex-end;
    width: 15px;
    padding-right: 3px;
}

.pointer {
    position: absolute;
    top: 413px;
    left: 582px;
    width: 14px;
    height: 22px;
}
```
